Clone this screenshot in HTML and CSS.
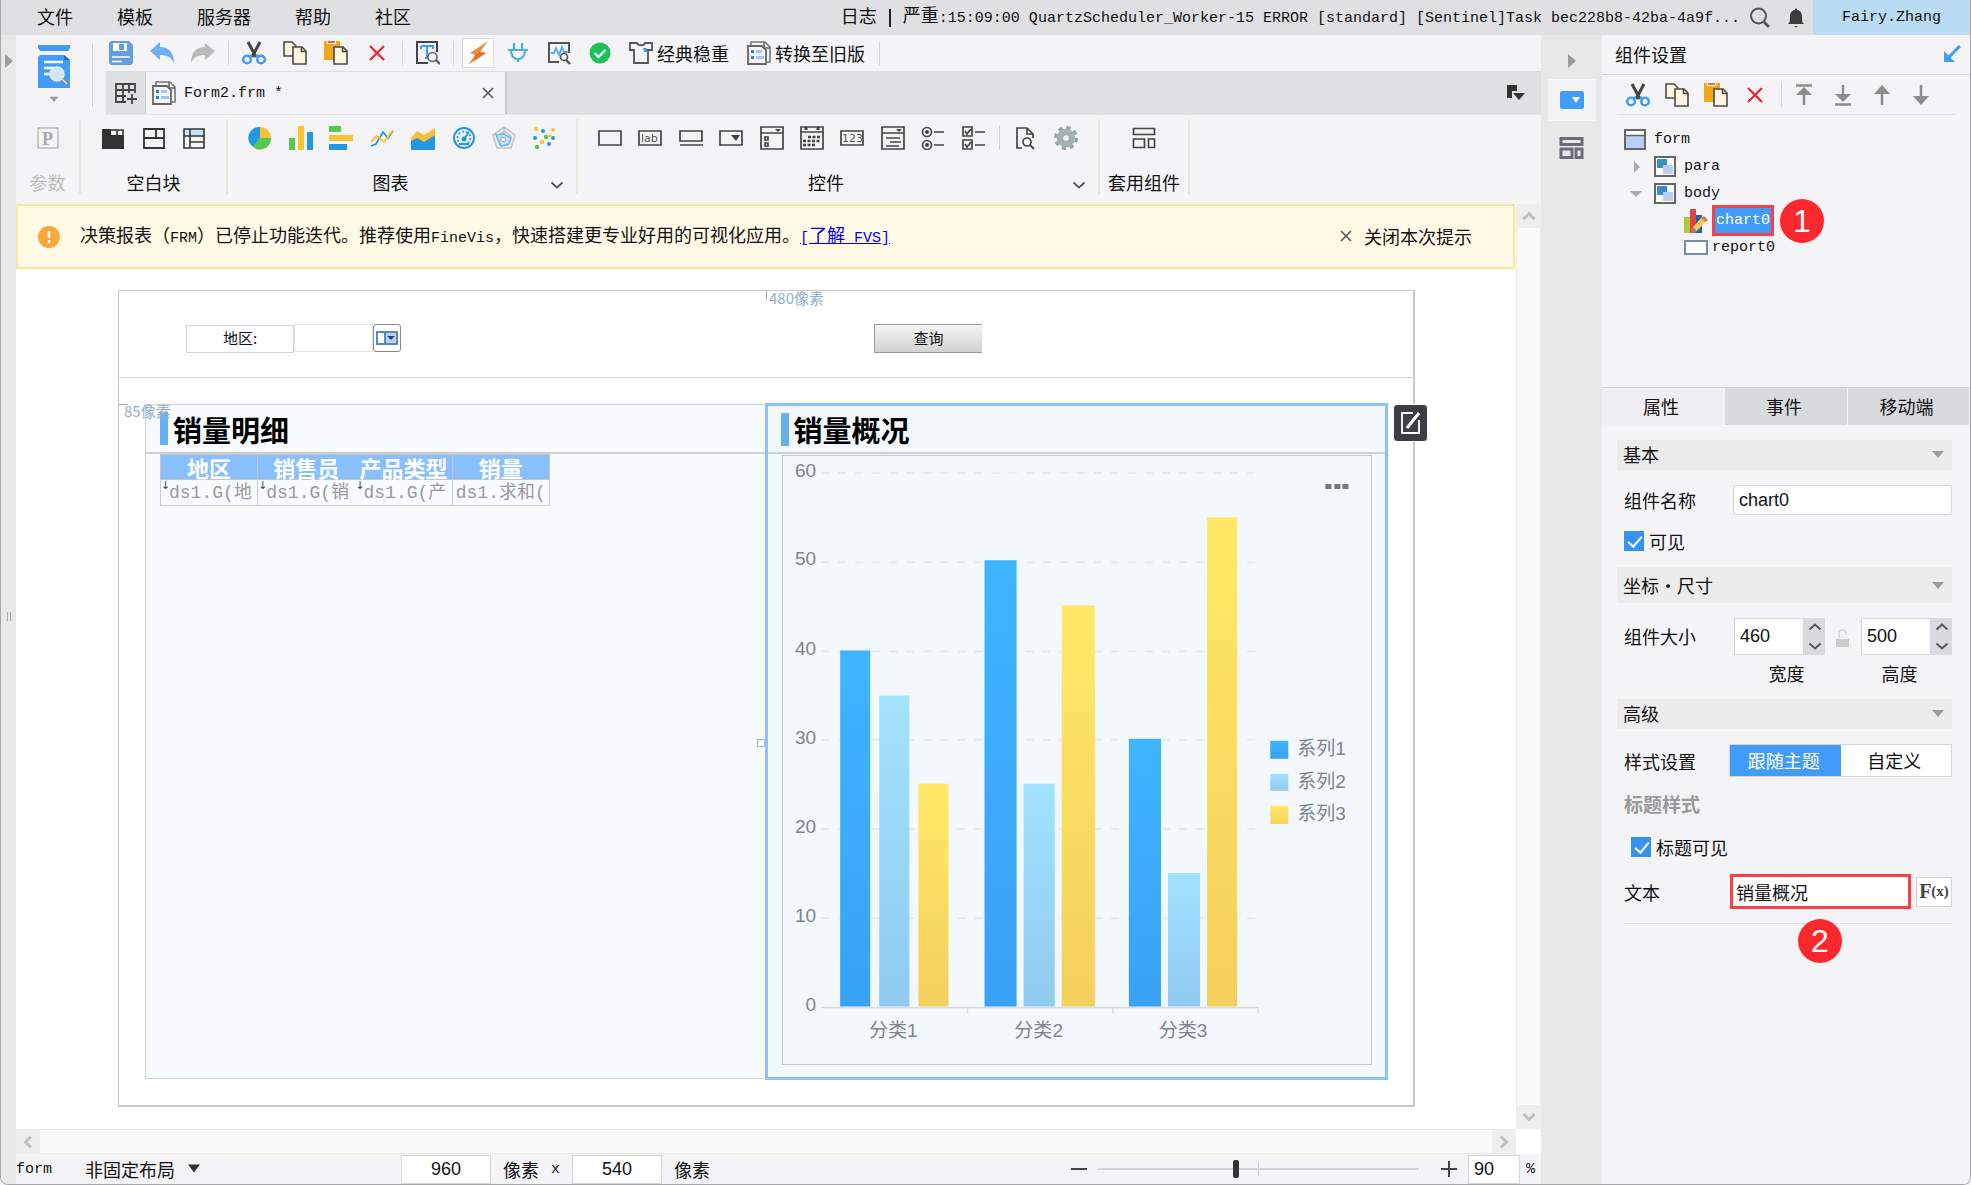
FILE: index.html
```html
<!DOCTYPE html>
<html lang="zh-CN">
<head>
<meta charset="utf-8">
<title>Form2.frm</title>
<link rel="stylesheet" href="styles.css">
</head>
<body>
<svg class="defs" aria-hidden="true">
  <symbol id="cut" viewBox="0 0 24 24"><path d="M6 1l8 15M18 1l-8 15" stroke="#444" stroke-width="3" fill="none"/><path d="M10 14l-3 2M14 14l3 2" stroke="#419bf9" stroke-width="2.5"/><circle cx="5" cy="18.500" r="3.800" fill="none" stroke="#419bf9" stroke-width="2.500"/><circle cx="19" cy="18.500" r="3.800" fill="none" stroke="#419bf9" stroke-width="2.500"/></symbol>
  <symbol id="copy" viewBox="0 0 24 24"><path d="M1 1h8l4 4v10H1z" fill="#fff6df" stroke="#4a4a4a" stroke-width="1.600"/><path d="M10 6h9l4 4v13H10z" fill="#fff6df" stroke="#4a4a4a" stroke-width="1.600"/><path d="M18.500 6v4.500H23" fill="none" stroke="#4a4a4a" stroke-width="1.600"/></symbol>
  <symbol id="paste" viewBox="0 0 24 24"><path d="M0 0h16v19H0z" fill="#f0a818"/><path d="M3 0h9v3H3z" fill="#fff"/><path d="M4 0h7v2H4z" fill="#e0703a"/><path d="M10 6h9l4 4v13H10z" fill="#fff6df" stroke="#4a4a4a" stroke-width="1.600"/><path d="M18.500 6v4.500H23" fill="none" stroke="#4a4a4a" stroke-width="1.600"/></symbol>
  <symbol id="del" viewBox="0 0 24 24"><path d="M5 5l14 14M19 5L5 19" stroke="#e8262c" stroke-width="2.200"/></symbol>
  <symbol id="close" viewBox="0 0 12 12"><path d="M1 1l10 10M11 1L1 11" stroke="#555" stroke-width="1.600"/></symbol>
  <symbol id="chev" viewBox="0 0 14 14"><path d="M1.500 4.500L7 9.500l5.500-5" fill="none" stroke="#555" stroke-width="1.800"/></symbol>
  <symbol id="arr" viewBox="0 0 14 14"><path d="M1.500 4L7 9.500 12.500 4" fill="none" stroke="#bfbfbd" stroke-width="3"/></symbol>
  <symbol id="tri" viewBox="0 0 12 8"><path d="M0 1h12L6 8z" fill="#9c9c9c"/></symbol>
  <symbol id="blocks" viewBox="0 0 24 22"><path d="M1.500 1.500h21v6h-21zM1.500 12h11v8.500h-11zM16.500 12h6v8.500h-6z" fill="none" stroke="currentColor" stroke-width="var(--w)"/></symbol>
  <symbol id="form" viewBox="0 0 24 24"><path d="M4 5V1h14l5 5v15h-3" fill="none" stroke="#777" stroke-width="1.600"/><path d="M1 5h14l4 4v14H1z" fill="#f4f4f7" stroke="#666" stroke-width="1.800"/><path d="M17 1v6h6" fill="none" stroke="#666" stroke-width="1.600"/><path d="M4 9h3v3H4zM4 15h3v3H4z" fill="#2f7fd0"/><path d="M9 9h6v3H9zM9 15h8v3H9z" fill="#9fc6f5"/></symbol>
  <symbol id="box" viewBox="0 0 22 21"><path d="M1 1h20v19H1z" fill="#fff" stroke="#666" stroke-width="2"/><path d="M3 3h10v9H3z" fill="#3590c8"/><path d="M9 9h10v9H9z" fill="#b7cff3"/></symbol>
</svg>

<div class="app">
  <header class="menubar">
    <nav class="menus">
      <button>文件</button><button>模板</button><button>服务器</button><button>帮助</button><button>社区</button>
    </nav>
    <div class="log"><span>日志</span><i></i><span><b>严重</b>:15:09:00 QuartzScheduler_Worker-15 ERROR [standard] [Sentinel]Task bec228b8-42ba-4a9f...</span></div>
    <button class="top-ic" aria-label="搜索"><svg width="22" height="22" viewBox="0 0 22 22"><circle cx="9.500" cy="9" r="7.500" fill="none" stroke="#555" stroke-width="2"/><path d="M15 15l5 5" stroke="#555" stroke-width="2.800"/></svg></button>
    <button class="top-ic bell" aria-label="通知"><svg width="18" height="22" viewBox="0 0 18 22"><path d="M9 1l1.500 2C14 4 15 6.500 15 10c0 4 0 5 2 7H1c2-2 2-3 2-7 0-3.500 1-6 4.500-7zM7 19h4l-2 1.500z" fill="#3c3c3c"/></svg></button>
    <button class="user">Fairy.Zhang</button>
  </header>

  <div class="work">
    <aside class="strip">
      <svg width="8" height="14" viewBox="0 0 8 14"><path d="M0 0l8 7-8 7z" fill="#9c9c9c"/></svg>
      <span class="grip"></span>
    </aside>

    <main class="main">
      <div class="head">
        <button class="logo" aria-label="预览">
          <svg width="32" height="43" viewBox="0 0 32 43"><path d="M0 0h32v3l-2 3H2L0 3z" fill="#419bf9"/><path d="M2 10h24l6 5v28H0V12z" fill="#419bf9"/><path d="M26 10l6 5h-6z" fill="#1f6fc4"/><path d="M6 17h19M6 23h10M6 29h7" stroke="#fff" stroke-width="2.500"/><circle cx="19" cy="29" r="7" fill="#cfe8fb" stroke="#e9eef2" stroke-width="1.500"/><path d="M24 34l6 6" stroke="#8a8a8a" stroke-width="3.500"/><path d="M24 34l5 5" stroke="#ddd" stroke-width="1.500"/></svg>
          <svg width="10" height="6" viewBox="0 0 12 8"><use href="#tri"/></svg>
        </button>
        <span class="head-sep"></span>
        <div class="head-rows">
          <div class="toolbar">
            <button aria-label="保存"><svg viewBox="0 0 24 24"><path d="M2 0h18l4 4v18l-2 2H2l-2-2V2z" fill="#619ee2"/><path d="M4 2h14v8H4z" fill="#fff"/><path d="M10 3h5v6h-5z" fill="#619ee2"/><path d="M3 16h18M3 20.500h10" stroke="#fff" stroke-width="1.600"/></svg></button>
            <button aria-label="撤销"><svg viewBox="0 0 24 24"><path d="M0 10l10-9v5c9 0 14 6 14 16-3-6-7-8-14-8v5z" fill="#6fb0f3"/></svg></button>
            <button aria-label="重做"><svg viewBox="0 0 24 24"><path d="M24 10L14 2v4C5 6 0 12 0 22c3-6 7-8 14-8v5z" fill="#b9b9b9"/></svg></button>
            <i class="sep"></i>
            <button aria-label="剪切"><svg><use href="#cut"/></svg></button>
            <button aria-label="复制"><svg><use href="#copy"/></svg></button>
            <button aria-label="粘贴"><svg><use href="#paste"/></svg></button>
            <button aria-label="删除"><svg><use href="#del"/></svg></button>
            <i class="sep"></i>
            <button aria-label="查找"><svg viewBox="0 0 24 24"><path d="M12 22H1V1h20v10" fill="none" stroke="#444" stroke-width="2"/><path d="M5 5h12v3M5 8V5M11 5v12M9 17h4" fill="none" stroke="#419bf9" stroke-width="2.200"/><circle cx="16.500" cy="16" r="4.500" fill="#f4f4f7" stroke="#666" stroke-width="1.600"/><path d="M20 19l4 4" stroke="#666" stroke-width="2.500"/></svg></button>
            <i class="sep"></i>
            <button class="boxed" aria-label="主题"><svg viewBox="0 0 24 24"><path d="M22 0L4 12l5 2-7 10 18-12-6-1z" fill="#f08c3c"/><path d="M9 14l5-3 6 1-12 8z" fill="#dc7430"/></svg></button>
            <button aria-label="数据连接"><svg viewBox="0 0 24 24"><path d="M8 2v6M16 2v6M2 9h20M5 9c0 6 3 9 7 9s7-3 7-9M12 18v3" fill="none" stroke="#45b0e8" stroke-width="2.200"/></svg></button>
            <button aria-label="监控"><svg viewBox="0 0 24 24"><path d="M12 21H2V2h20v10" fill="none" stroke="#555" stroke-width="2"/><path d="M4 12h3l2-5 3 7 3-8 2 5h4" fill="none" stroke="#55a7f7" stroke-width="1.800"/><circle cx="17" cy="16" r="3.500" fill="#f4f4f7" stroke="#555" stroke-width="1.600"/><path d="M19 19l4 4" stroke="#555" stroke-width="2.400"/></svg></button>
            <button aria-label="检查"><svg viewBox="0 0 24 24"><circle cx="12" cy="12" r="10.500" fill="#1cc255"/><path d="M6.500 12l4 4 7-7" fill="none" stroke="#fff" stroke-width="2.200"/></svg></button>
            <button class="wide"><svg viewBox="0 0 24 24"><path d="M1 2h7c1 3 7 3 8 0h7v7h-4v13H5V9H1z" fill="none" stroke="#555" stroke-width="1.800"/><path d="M14 7h4v4h-3z" fill="#419bf9"/></svg>经典稳重</button>
            <button class="wide"><svg><use href="#form"/></svg>转换至旧版</button>
            <i class="sep"></i>
          </div>
          <div class="tabs">
            <button class="newtab" aria-label="新建"><svg width="22" height="22" viewBox="0 0 22 22"><path d="M11 20H1V2h19v9M1 8h19M1 14h10M8 2v18M14 2v9" fill="none" stroke="#444" stroke-width="1.800"/><path d="M17 12v10M12 17h10" stroke="#444" stroke-width="1.800"/></svg></button>
            <div class="tab"><svg width="24" height="24"><use href="#form"/></svg><span>Form2.frm *</span><button aria-label="关闭"><svg width="12" height="12"><use href="#close"/></svg></button></div>
            <button class="tablist" aria-label="标签列表"><svg width="18" height="16" viewBox="0 0 18 16"><path d="M0 0h10v6H5v7H0z" fill="#333"/><path d="M6 8h12l-6 7z" fill="#333"/></svg></button>
          </div>
        </div>
      </div>

      <div class="ribbon">
        <section class="g g1 off"><div class="row"><svg viewBox="0 0 24 24"><path d="M2 2h20v20H2z" fill="none" stroke="#bbb" stroke-width="1.500"/><text x="6" y="19" class="p">P</text></svg></div><span>参数</span></section>
        <section class="g g2"><div class="row">
          <svg viewBox="0 0 24 24"><path d="M1 3h9v6h13v14H1z" fill="#333"/><path d="M10 4h6v5M16 4h6v5" fill="none" stroke="#333" stroke-width="1.600"/></svg>
          <svg viewBox="0 0 24 24"><path d="M2 3h20v19H2zM2 12h20M14 3v9" fill="none" stroke="#333" stroke-width="1.800"/></svg>
          <svg viewBox="0 0 24 24"><path d="M2 3h20v7H2z" fill="#bfe6fa"/><path d="M2 3h20v19H2zM2 10h20M8 16h14M8 3v19" fill="none" stroke="#333" stroke-width="1.600"/></svg>
        </div><span>空白块</span></section>
        <section class="g g3"><div class="row">
          <svg viewBox="0 0 24 24"><path d="M12 12V1a11 11 0 0 1 11 12z" fill="#fbc134"/><path d="M12 12h11a11 11 0 0 1-18 9z" fill="#55c84e"/><path d="M12 12L5 21A11 11 0 0 1 12 1z" fill="#2298e2"/></svg>
          <svg viewBox="0 0 24 24"><path d="M0 12h6v12H0z" fill="#55c84e"/><path d="M9 0h6v24H9z" fill="#fbc134"/><path d="M18 6h6v18h-6z" fill="#2298e2"/></svg>
          <svg viewBox="0 0 24 24"><path d="M0 0h12v6H0z" fill="#55c84e"/><path d="M0 9h24v6H0z" fill="#fbc134"/><path d="M0 18h18v6H0z" fill="#2298e2"/></svg>
          <svg viewBox="0 0 24 24"><path d="M1 20l5-2 7-12 5 6 5-7" fill="none" stroke="#2298e2" stroke-width="1.800"/><path d="M1 16l6-6 7 6 9-12" fill="none" stroke="#fbc134" stroke-width="1.800"/></svg>
          <svg viewBox="0 0 24 24"><path d="M0 12l6-7 7 4 11-7v22H0z" fill="#fbc134"/><path d="M0 15l6-3 7 4 11-7v15H0z" fill="#2298e2"/></svg>
          <svg viewBox="0 0 24 24"><circle cx="12" cy="12" r="10" fill="none" stroke="#2298e2" stroke-width="2"/><circle cx="12" cy="12" r="6.500" fill="none" stroke="#2298e2" stroke-width="1.800" stroke-dasharray="2 2"/><path d="M12 13l5-7" stroke="#2298e2" stroke-width="2"/><circle cx="12" cy="13" r="2.500" fill="#2298e2"/><path d="M7 18h10" stroke="#2298e2" stroke-width="2"/></svg>
          <svg viewBox="0 0 24 24"><path d="M12 1l11 8-4 13H5L1 9z M12 5l7 5-3 9H8L5 10zM12 1v12" fill="none" stroke="#c4c4c4" stroke-width="1.600"/><path d="M4 9l8-1 7 4-2 6-8 2z" fill="#bfe3f8" stroke="#63bdf0" stroke-width="1.600"/><path d="M9 11l5 1-1 4-4-1z" fill="#fff" stroke="#aaa"/></svg>
          <svg viewBox="0 0 24 24"><g fill="#fbc134"><circle cx="3" cy="3" r="2"/><circle cx="20" cy="4" r="2"/><circle cx="9" cy="16" r="2.200"/><circle cx="17" cy="10" r="1.500"/></g><g fill="#2298e2"><circle cx="10" cy="5" r="2"/><circle cx="2" cy="12" r="2"/><circle cx="16" cy="18" r="2"/><circle cx="20" cy="12" r="2"/></g><g fill="#55c84e"><circle cx="13" cy="11" r="2.200"/><circle cx="4" cy="21" r="2.200"/></g></svg>
        </div><span>图表</span><button class="more" aria-label="更多图表"><svg width="14" height="14"><use href="#chev"/></svg></button></section>
        <section class="g g4"><div class="row">
          <svg viewBox="0 0 24 24"><path d="M1 5h22v14H1z" class="ln"/></svg>
          <svg viewBox="0 0 24 24"><path d="M1 5h22v14H1z" class="ln"/><text x="3" y="16" class="mini">lab</text></svg>
          <svg viewBox="0 0 24 24"><path d="M1 5h22v10H1zM1 19h23" class="ln"/></svg>
          <svg viewBox="0 0 24 24"><path d="M1 5h22v14H1z" class="ln"/><path d="M12 9h9l-4 6z" fill="#444"/></svg>
          <svg viewBox="0 0 24 24"><path d="M1 1h22v22H1zM1 7h22M5 11h3v3H5zM5 17h3v3H5z" class="ln"/><path d="M15 3h6l-3 3z" fill="#444"/></svg>
          <svg viewBox="0 0 24 24"><path d="M1 1h22v22H1zM1 6h22" class="ln"/><path d="M8 11h12M3 15h17M3 19h12" stroke="#444" stroke-width="2.500" stroke-dasharray="3 1.500"/><path d="M6 1v3M18 1v3" stroke="#444" stroke-width="3"/></svg>
          <svg viewBox="0 0 24 24"><path d="M1 5h22v14H1z" class="ln"/><text x="2" y="16" class="mini">123</text></svg>
          <svg viewBox="0 0 24 24"><path d="M1 1h22v22H1zM1 7h22M5 12h14M9 16h11M5 20h13" class="ln"/><path d="M15 3h6l-3 3z" fill="#444"/></svg>
          <svg viewBox="0 0 24 24"><circle cx="6" cy="6" r="4.500" class="ln"/><circle cx="6" cy="6" r="2" fill="#444"/><circle cx="6" cy="19" r="4.500" class="ln"/><circle cx="6" cy="19" r="2" fill="#444"/><path d="M13 6h10M13 19h10" class="ln"/></svg>
          <svg viewBox="0 0 24 24"><path d="M1 1h9v9H1zM1 14h9v9H1zM3 5l2 3 4-5M3 18l2 3 4-5M13 6h10M13 19h10" class="ln"/></svg>
          <i class="sep"></i>
          <svg viewBox="0 0 24 24"><path d="M9 22H4V2h10l6 6v4M14 2v6h6" class="ln"/><circle cx="14" cy="16" r="4" class="ln"/><path d="M17 19l4 4" stroke="#444" stroke-width="2"/></svg>
          <svg viewBox="0 0 24 24"><circle cx="12" cy="12" r="10" fill="none" stroke="#93a3a3" stroke-width="4" stroke-dasharray="4 3.850"/><circle cx="12" cy="12" r="6" fill="none" stroke="#a3b1b1" stroke-width="6.500"/></svg>
        </div><span>控件</span><button class="more" aria-label="更多控件"><svg width="14" height="14"><use href="#chev"/></svg></button></section>
        <section class="g g5"><div class="row"><svg class="bl"><use href="#blocks"/></svg></div><span>套用组件</span></section>
      </div>

      <div class="editor">
        <div class="canvas">
          <div class="banner">
            <svg width="22" height="22" viewBox="0 0 22 22"><circle cx="11" cy="11" r="11" fill="#f9a93a"/><path d="M11 5v7M11 14v3" stroke="#fff" stroke-width="2.500"/></svg>
            <p>决策报表（<span class="mono">FRM</span>）已停止功能迭代。推荐使用<span class="mono">FineVis</span>，快速搭建更专业好用的可视化应用。<a href="#fvs"><span class="mono">[</span>了解<span class="mono"> FVS]</span></a></p>
            <button><svg width="12" height="12"><use href="#close"/></svg>关闭本次提示</button>
          </div>
          <div class="stage">
            <div class="form">
              <div class="para">
                <span class="mark m480">480像素</span>
                <label for="area">地区:</label><input id="area"><button class="drop" aria-label="展开"><svg width="22" height="14" viewBox="0 0 22 14"><path d="M1 1h20v12H1z" fill="#fff" stroke="#5b86c4" stroke-width="2"/><path d="M9 1h12v12H9z" fill="#b9d2f0" stroke="#5b86c4" stroke-width="2"/><path d="M11 5h8l-4 4z" fill="#223f8f"/></svg></button>
                <button class="query">查询</button>
              </div>
              <div class="body">
                <span class="mark m85">85像素</span>
                <section class="card">
                  <h2>销量明细</h2>
                  <table>
                    <thead><tr><th>地区</th><th>销售员</th><th>产品类型</th><th>销量</th></tr></thead>
                    <tbody><tr><td class="d">ds1.G(地</td><td class="d">ds1.G(销</td><td class="d">ds1.G(产</td><td>ds1.求和(</td></tr></tbody>
                  </table>
                </section>
                <section class="card sel">
                  <i class="handle"></i>
                  <button class="edit" aria-label="编辑"><svg width="22" height="24" viewBox="0 0 22 24"><path d="M13 2H2v20h17V9" fill="none" stroke="#fff" stroke-width="1.800"/><path d="M7 17l12-15" stroke="#fff" stroke-width="3"/></svg></button>
                  <h2>销量概况</h2>
                  <div class="chart">
                    <svg viewBox="0 0 587 606" role="img" aria-label="销量概况">
                      <defs>
                        <linearGradient id="a" x2="0" y2="1"><stop stop-color="#3fb5ff"/><stop offset="1" stop-color="#38a2f6"/></linearGradient>
                        <linearGradient id="b" x2="0" y2="1"><stop stop-color="#a2e3ff"/><stop offset="1" stop-color="#8fcaf0"/></linearGradient>
                        <linearGradient id="c" x2="0" y2="1"><stop stop-color="#ffe966"/><stop offset="1" stop-color="#f4d05c"/></linearGradient>
                      </defs>
                      <path class="grid" d="M38 17h435M38 106h435M38 195h435M38 283h435M38 372h435M38 461h435"/>
                      <path d="M38 550h436v6M329 550v6M184 550v6" fill="none" stroke="#d9dde2" stroke-width="1.500"/>
                      <path fill="url(#a)" d="M57 194h30v355H57z"/><path fill="url(#a)" d="M201 104h32v445h-32z"/><path fill="url(#a)" d="M345 282h32v267h-32z"/>
                      <path fill="url(#b)" d="M96 239h30v310H96z"/><path fill="url(#b)" d="M240 327h31v222h-31z"/><path fill="url(#b)" d="M384 416h32v133h-32z"/>
                      <path fill="url(#c)" d="M135 327h30v222h-30z"/><path fill="url(#c)" d="M278 149h33v400h-33z"/><path fill="url(#c)" d="M423 61h30v488h-30z"/>
                      <g class="t end"><text x="33" y="21">60</text><text x="33" y="109">50</text><text x="33" y="198">40</text><text x="33" y="287">30</text><text x="33" y="376">20</text><text x="33" y="465">10</text><text x="33" y="554">0</text></g>
                      <g class="t mid"><text x="110" y="580">分类1</text><text x="255" y="580">分类2</text><text x="399" y="580">分类3</text></g>
                      <path d="M486 284h18v18h-18z" fill="url(#a)"/><path d="M486 317h18v17h-18z" fill="url(#b)"/><path d="M486 349h18v18h-18z" fill="url(#c)"/>
                      <g class="t"><text x="513" y="298">系列1</text><text x="513" y="331">系列2</text><text x="513" y="363">系列3</text></g>
                      <path d="M541 28h6v5h-6zM550 28h6v5h-6zM558 28h6v5h-6z" fill="#747a80"/>
                    </svg>
                  </div>
                </section>
              </div>
            </div>
          </div>
        </div>
        <div class="vbar"><button aria-label="向上"><svg width="14" height="14" class="up"><use href="#arr"/></svg></button><button aria-label="向下"><svg width="14" height="14"><use href="#arr"/></svg></button></div>
        <div class="hbar"><button aria-label="向左"><svg width="14" height="14" class="lf"><use href="#arr"/></svg></button><button aria-label="向右"><svg width="14" height="14" class="rt"><use href="#arr"/></svg></button></div>
      </div>

      <footer class="status">
        <span class="st-name">form</span>
        <button class="layout">非固定布局<svg width="12" height="9" viewBox="0 0 12 8"><path d="M0 0h12L6 8z" fill="#333"/></svg></button>
        <label class="dim"><input value="960">像素</label><span class="times">x</span><label class="dim"><input value="540">像素</label>
        <div class="zoom">
          <button aria-label="缩小"><svg width="16" height="16" viewBox="0 0 16 16"><path d="M0 8h16" stroke="#444" stroke-width="2"/></svg></button>
          <input type="range" min="0" max="100" value="43" aria-label="缩放">
          <button aria-label="放大"><svg width="16" height="16" viewBox="0 0 16 16"><path d="M0 8h16M8 0v16" stroke="#444" stroke-width="2"/></svg></button>
        </div>
        <label class="pct"><input value="90">%</label>
      </footer>
    </main>

    <nav class="rail">
      <svg width="8" height="14" viewBox="0 0 8 14"><path d="M0 0l8 7-8 7z" fill="#9c9c9c"/></svg>
      <button class="on" aria-label="组件设置"><svg width="24" height="18" viewBox="0 0 24 18"><rect width="24" height="18" rx="2" fill="#419bf9"/><path d="M12 6h8l-4 6z" fill="#fff"/></svg></button>
      <button aria-label="组件库"><svg width="25" height="22" class="thick"><use href="#blocks"/></svg></button>
    </nav>

    <aside class="panel">
      <div class="ptitle"><h1>组件设置</h1><button aria-label="停靠"><svg width="17" height="17" viewBox="0 0 17 17"><path d="M16 1L5 12" stroke="#419bf9" stroke-width="3"/><path d="M0 6l11 11H0z" fill="#419bf9"/></svg></button></div>
      <div class="ptools">
        <button aria-label="剪切"><svg><use href="#cut"/></svg></button><button aria-label="复制"><svg><use href="#copy"/></svg></button><button aria-label="粘贴"><svg><use href="#paste"/></svg></button><button aria-label="删除"><svg><use href="#del"/></svg></button>
        <i class="sep"></i>
        <button aria-label="置顶"><svg viewBox="0 0 24 24"><path d="M4 2.500h16M12 22V8" class="ar"/><path d="M4 12l8-8 8 8z" fill="#8c8c8c"/></svg></button>
        <button aria-label="置底"><svg viewBox="0 0 24 24"><path d="M4 21.500h16M12 2v12" class="ar"/><path d="M4 11l8 8 8-8z" fill="#8c8c8c"/></svg></button>
        <button aria-label="上移"><svg viewBox="0 0 24 24"><path d="M12 22V8" class="ar"/><path d="M4 11l8-9 8 9z" fill="#8c8c8c"/></svg></button>
        <button aria-label="下移"><svg viewBox="0 0 24 24"><path d="M12 2v14" class="ar"/><path d="M4 13l8 9 8-9z" fill="#8c8c8c"/></svg></button>
      </div>
      <ul class="tree">
        <li><svg width="22" height="21" viewBox="0 0 22 21"><path d="M1 1h20v19H1z" fill="#fff" stroke="#666" stroke-width="2"/><path d="M2 7h18v12H2z" fill="#b7cff3"/><path d="M1 6.500h20" stroke="#666" stroke-width="1.500"/></svg>form</li>
        <li class="l1"><svg width="12" height="12" viewBox="0 0 12 12"><path d="M4 0l6 6-6 6z" fill="#aaa"/></svg><svg width="22" height="21"><use href="#box"/></svg>para</li>
        <li class="l1"><svg width="12" height="12" viewBox="0 0 12 12"><path d="M0 3h12L6 9z" fill="#aaa"/></svg><svg width="22" height="21"><use href="#box"/></svg>body</li>
        <li class="l2"><svg width="24" height="24" viewBox="0 0 24 24"><path d="M0 8h6v16H0z" fill="#b4c83e"/><path d="M6 0h6v24H6z" fill="#e64146"/><path d="M12 6h6v18h-6z" fill="#1469b0"/><path d="M9 18l9-10 4 4-9 10-5 2z" fill="#fbc858"/><path d="M17 9l3-2 4 4-3 2z" fill="#f07050"/><path d="M8 24l1-6 4 4z" fill="#888"/></svg><mark>chart0</mark><b class="step">1</b></li>
        <li class="l2"><svg width="24" height="15" viewBox="0 0 24 15"><path d="M1 1h22v13H1z" fill="#fff" stroke="#6d8cba" stroke-width="2"/></svg>report0</li>
      </ul>
      <div class="ptabs"><button class="on">属性</button><button>事件</button><button>移动端</button></div>
      <div class="props">
        <h3>基本<svg width="12" height="8"><use href="#tri"/></svg></h3>
        <div class="f f-name"><label for="nm">组件名称</label><input id="nm" value="chart0"></div>
        <label class="ck"><input type="checkbox" checked>可见</label>
        <h3 class="tall">坐标・尺寸<svg width="12" height="8"><use href="#tri"/></svg></h3>
        <div class="f f-size"><span>组件大小</span>
          <label class="spin w"><span class="nb"><input value="460"><span><button aria-label="增加"><svg width="14" height="14" class="up"><use href="#chev"/></svg></button><button aria-label="减少"><svg width="14" height="14"><use href="#chev"/></svg></button></span></span><span>宽度</span></label>
          <svg class="lock" width="14" height="20" viewBox="0 0 14 20"><path d="M0 11h13v8H0z" fill="#ccc"/><path d="M3 11V5c0-4 7-4 7 0v1" fill="none" stroke="#d6d6d6" stroke-width="1.500"/></svg>
          <label class="spin h"><span class="nb"><input value="500"><span><button aria-label="增加"><svg width="14" height="14" class="up"><use href="#chev"/></svg></button><button aria-label="减少"><svg width="14" height="14"><use href="#chev"/></svg></button></span></span><span>高度</span></label>
        </div>
        <h3>高级<svg width="12" height="8"><use href="#tri"/></svg></h3>
        <div class="f f-style"><span>样式设置</span><div class="seg"><button class="on">跟随主题</button><button>自定义</button></div></div>
        <h4>标题样式</h4>
        <label class="ck in"><input type="checkbox" checked>标题可见</label>
        <div class="f f-text"><label for="tx">文本</label><input id="tx" value="销量概况"><button class="fx">F<small>(x)</small></button><b class="step">2</b></div>
      </div>
    </aside>
  </div>
</div>
</body>
</html>
```
FILE: styles.css
```css
* { box-sizing: border-box; }
body { margin: 0; font: 18px/24px "Noto Sans CJK SC", sans-serif; color: #111; background: #f4f4f7; }
body, button, input { font-family: "Noto Sans CJK SC", sans-serif; }
button { border: 0; padding: 0; margin: 0; background: none; color: inherit; font-size: 18px; line-height: 24px; display: flex; align-items: center; justify-content: center; }
input { border: 1px solid #d6d7da; background: #fff; color: #111; font: 18px "Liberation Sans", "Noto Sans CJK SC", sans-serif; padding: 0 5px; margin: 0; min-width: 0; border-radius: 0; }
h1, h2, h3, h4, p, ul { margin: 0; padding: 0; font-weight: 400; font-size: 18px; list-style: none; }
svg { display: block; flex: none; }
.defs { position: absolute; width: 0; height: 0; }
.sep { flex: none; width: 1px; height: 24px; background: #d2d3d6; }
.mono { font-family: "Liberation Mono", monospace; font-size: 15px; }
.up { transform: rotate(180deg); }
.lf { transform: rotate(90deg); }
.rt { transform: rotate(-90deg); }

.app { min-height: 100vh; display: flex; flex-direction: column; border: 1px solid #a6a6a8; border-top: 0; border-radius: 0 0 8px 8px; overflow: hidden; }
.work { flex: 1; display: flex; }

/* menu bar */
.menubar { height: 35px; background: #e0e0e2; display: flex; align-items: center; }
.menus { display: flex; gap: 44px; padding: 0 0 4px 36px; margin-right: auto; }
.log { display: flex; align-items: center; white-space: nowrap; padding-right: 9px; font: 15px/24px "Liberation Mono", "Noto Sans CJK SC", monospace; }
.log b, .log span:first-child { font-size: 18px; font-weight: 400; }
.log i { width: 2px; height: 18px; background: #222; margin: 0 12px; }
.top-ic { width: 22px; margin-right: 16px; }
.bell { width: 18px; margin-right: 8px; }
.user { width: 157px; height: 35px; background: #b9dcf2; font: 15px "Liberation Mono", monospace; }

/* left strip */
.strip { width: 15px; background: #e8e8e8; display: flex; flex-direction: column; align-items: center; padding: 19px 0; }
.grip { width: 4px; height: 9px; border: solid #aaa; border-width: 0 1px; margin: auto 0; }

.main { flex: 1; min-width: 0; display: flex; flex-direction: column; }

/* head: logo, toolbar and document tabs */
.head { display: flex; }
.logo { width: 76px; flex-direction: column; gap: 8px; padding-bottom: 4px; }
.head-sep { width: 1px; background: #d2d3d6; margin: 9px 13px 8px 0; }
.head-rows { flex: 1; }
.toolbar { height: 37px; display: flex; align-items: center; gap: 17px; padding-left: 3px; border-bottom: 1px solid #dcdde0; }
.toolbar svg, .ptools svg { width: 24px; height: 24px; }
.toolbar .sep { margin: 0 -4px; }
.toolbar .boxed { width: 32px; height: 30px; background: #fff; border: 1px solid #ddd; margin: 0 -5px 0 -5px; }
.toolbar .wide { gap: 4px; padding-bottom: 1px; margin-right: 1px; }
.tabs { height: 43px; background: #e0e0e2; display: flex; align-items: stretch; border-bottom: 1px solid #e6e6e9; }
.newtab { width: 40px; border-right: 1px solid #d0d0d2; }
.tab { width: 361px; background: #f4f4f7; border-right: 2px solid #cbcbce; display: flex; align-items: center; gap: 8px; padding: 0 11px 0 6px; font: 15px/24px "Liberation Mono", monospace; }
.tab span { padding-top: 2px; }
.tab button, .tablist { margin-left: auto; }
.tablist { margin-right: 16px; }

/* ribbon */
.ribbon { height: 89px; display: flex; padding: 4px 0 10px; }
.g { position: relative; border-right: 2px solid #e8e7de; display: flex; flex-direction: column; align-items: center; justify-content: space-between; padding-top: 7px; }
.row { display: flex; justify-content: space-between; align-items: center; align-self: stretch; height: 24px; }
.row svg { width: 24px; height: 24px; }
.g > span { line-height: 24px; white-space: nowrap; }
.g1 { width: 65px; padding-right: 20px; padding-left: 20px; }
.off { color: #bdbdbd; }
.g2 { width: 147px; padding-left: 20px; padding-right: 20px; }
.g3 { width: 350px; padding-left: 20px; padding-right: 19px; }
.g4 { width: 522px; padding-left: 20px; padding-right: 20px; }
.g3 > span, .g4 > span { padding-right: 24px; }
.g4 .sep { margin: 0 -3px; }
.g5 { width: 90px; }
.g5 .row { justify-content: center; }
.more { position: absolute; right: 12px; bottom: 2px; }
.bl { --w: 1.700; color: #444; }
.ln { fill: none; stroke: #444; stroke-width: 1.700; }
.mini { font: 11px "DejaVu Sans", sans-serif; fill: #555; }
.p { font: bold 18px "Liberation Serif", serif; fill: #aaa; }

/* editor */
.editor { flex: 1; display: grid; grid-template-columns: 1fr 25px; grid-template-rows: 1fr 25px; background: #fff; }
.canvas { display: flex; flex-direction: column; }
.banner { height: 65px; margin-right: 1px; background: #fffae6; border: 2px solid #fde49a; display: flex; align-items: center; padding: 0 41px 0 20px; }
.banner p { margin-left: 20px; white-space: nowrap; }
.banner a { color: #00f; }
.banner button { margin-left: auto; gap: 12px; padding-bottom: 2px; }
.stage { flex: 1; display: flex; padding: 21px 101px 22px 102px; }
.form { flex: 1; display: flex; flex-direction: column; border: solid #c9c9c9; border-width: 1px 2px 2px 1px; }
.para { position: relative; height: 87px; border-bottom: 1px solid #cfcfcf; display: flex; align-items: flex-start; padding: 33px 0 0 67px; font-size: 15px; }
.para label { width: 108px; height: 28px; border: 1px solid #d5d5d5; text-align: center; margin-top: 1px; }
.para input { width: 79px; height: 28px; border-color: #e2e2e2; }
.drop { width: 28px; height: 28px; border: 1px solid #888; border-radius: 3px; }
.query { width: 108px; height: 29px; margin-left: 473px; padding-bottom: 2px; border: solid #999; border-width: 1px 0 1px 1px; background: linear-gradient(#f4f4f4, #d2d2d2); font-size: 15px; }
.mark { position: absolute; font-size: 15px; line-height: 14px; color: #8fafcc; }
.m480 { left: 647px; top: 0; padding-left: 3px; }
.m480::before { content: ""; position: absolute; left: 0; top: 0; height: 9px; border-left: 1px solid #8fafcc; }
.m85 { left: 0; top: 26px; padding-left: 5px; z-index: 2; }
.m85::before { content: ""; position: absolute; left: 0; top: 0; width: 9px; border-top: 1px solid #8fafcc; }
.body { position: relative; flex: 1; display: grid; grid-template-columns: 1fr 1fr; padding: 26px 25px 26px 26px; }
.card { position: relative; background: #f8fcff; border: 1px solid #d2d4d6; }
.card h2 { height: 49px; border-bottom: 2px solid #d0d0d0; display: flex; align-items: center; gap: 5px; padding: 0 14px; font: bold 29px/44px "Noto Sans CJK SC", sans-serif; color: #000; }
.card h2::before { content: ""; width: 8px; height: 33px; background: #64b1ee; }
.sel { background: #f3f8fd; border: 3px solid #8bc2fb; margin: -1px 0 -1px -2px; }
.sel h2 { height: 48px; padding-left: 13px; }
.handle { position: absolute; left: -11px; top: 333px; width: 8px; height: 8px; border: 1px solid #9fbfe0; background: #fff; }
.edit { position: absolute; left: 100%; margin-left: 8px; top: -2px; width: 35px; height: 38px; background: #3b3e42; border: 1px solid #fff; border-radius: 4px; }
.chart { margin: 1px 13px 0 14px; border: 1px solid #c3c5c8; }
.chart svg { width: 100%; height: auto; }
.grid { fill: none; stroke: #e6eaee; stroke-width: 2; stroke-dasharray: 8 9; }
.t { font: 19px "Liberation Sans", "Noto Sans CJK SC", sans-serif; fill: #7d848c; }
.end { text-anchor: end; }
.mid { text-anchor: middle; }
table { margin-left: 14px; border-collapse: collapse; table-layout: fixed; width: 390px; }
th { height: 25px; background: #88bfff; color: #fff; font-size: 22px; line-height: 24px; padding: 0; border: 1px solid #c4c4c4; white-space: nowrap; }
td { position: relative; height: 26px; padding: 2px 0 0 8px; border: 1px solid #ccc; font: 18px/23px "Liberation Mono", "Noto Sans CJK SC", monospace; color: #999; white-space: nowrap; overflow: hidden; }
th:nth-child(2), td:nth-child(2) { border-right-color: transparent; }
th:nth-child(3), td:nth-child(3) { border-left: 0; }
td:last-child { padding-left: 3px; }
.d::before { content: "↓"; position: absolute; left: 0; top: 0; font: 11px/11px "DejaVu Sans", sans-serif; color: #444; }
.vbar { grid-column: 2; grid-row: 1; background: #f9f9f7; border: solid #ecebdf; border-width: 0 1px; display: flex; flex-direction: column; justify-content: space-between; }
.hbar { background: #f9f9f7; border: solid #ecebdf; border-width: 1px 0; display: flex; justify-content: space-between; }
.vbar button, .hbar button { width: 24px; height: 24px; background: #eeeeec; }

/* status bar */
.status { height: 30px; display: flex; align-items: center; background: #f4f4f7; font-size: 18px; }
.status input { height: 29px; }
.st-name, .times { font: 15px "Liberation Mono", monospace; }
.layout { margin-left: 33px; gap: 13px; padding-bottom: 1px; }
.dim { display: flex; align-items: center; gap: 12px; }
.dim input { width: 90px; text-align: center; }
.layout + .dim { margin-left: 201px; }
.times { margin: 0 12px; }
.zoom { margin-left: auto; display: flex; align-items: center; }
.zoom input { appearance: none; width: 321px; height: 20px; margin: 0 22px 0 11px; padding: 0; border: 0; background: linear-gradient(#ccc, #ccc) center / 1px 14px no-repeat, linear-gradient(#d6d6d8, #d6d6d8) center / 100% 2px no-repeat; }
.zoom input::-webkit-slider-thumb { appearance: none; width: 6px; height: 18px; border-radius: 2px; background: #333; }
.pct { display: flex; align-items: center; gap: 6px; margin: 0 6px 0 11px; font: 15px "Liberation Mono", monospace; }
.pct input { width: 52px; }

/* right rail */
.rail { width: 61px; background: #e8e8e8; display: flex; flex-direction: column; align-items: center; padding-top: 19px; }
.rail button { width: 48px; height: 42px; margin-top: 6px; }
.rail .on { background: #f4f4f7; margin-top: 11px; }
.thick { --w: 3; color: #6b6c77; }

/* settings panel */
.panel { width: 368px; background: #f4f4f7; }
.ptitle { height: 40px; display: flex; align-items: center; justify-content: space-between; padding: 0 9px 2px 13px; border-bottom: 1px solid #d8d8db; }
.ptools { height: 40px; margin: 0 15px; display: flex; align-items: center; gap: 15px; padding-left: 9px; border-bottom: 1px solid #e0e0e3; }
.ptools .sep { margin: 0 -5px 0 -1px; }
.ar { fill: none; stroke: #8c8c8c; stroke-width: 2.500; }
.tree { height: 273px; padding: 11px 0 0 22px; border-bottom: 1px solid #d3d4d7; font: 15px "Liberation Mono", monospace; }
.tree li { display: flex; align-items: center; height: 27px; gap: 8px; }
.tree .l1 { padding-left: 6px; }
.l1 svg + svg { margin-left: 4px; }
.tree .l2 { padding-left: 60px; gap: 4px; }
mark { background: #419bf9; color: #fff; height: 31px; width: 62px; border: 3px solid #fa4046; line-height: 26px; text-align: center; flex: none; }
.step { flex: none; width: 44px; height: 44px; border-radius: 50%; background: #fd282e; color: #fff; font: 32px/44px "Liberation Sans", sans-serif; text-align: center; }
.tree .step { margin-left: 2px; }
.ptabs { display: grid; grid-template-columns: 122px 122px 1fr; height: 37px; gap: 1px; margin-right: 1px; }
.ptabs button { background: #d9dadd; padding: 0 4px 2px 0; }
.ptabs .on { background: #f0f0f2; }
.props { padding: 15px 18px 0 15px; }
.props > * { margin-left: 7px; }
h3 { display: flex; align-items: center; justify-content: space-between; height: 30px; background: #ececec; padding: 0 8px 2px 6px; }
.props h3 { margin-left: 0; }
.props .tall { height: 36px; padding-bottom: 0; }
.f { display: flex; align-items: center; justify-content: space-between; }
.f-name { margin-top: 15px; height: 30px; }
.f-name input { width: 219px; height: 30px; }
.ck { display: flex; align-items: center; gap: 5px; width: max-content; margin-top: 14px; margin-bottom: 14px; }
.props .in { margin-left: 14px; }
.ck input { appearance: none; width: 20px; height: 20px; background: #3694f0; border: 0; padding: 0; position: relative; }
.ck input::before { content: ""; position: absolute; left: 7px; top: 2px; width: 6px; height: 12px; border: solid #fff; border-width: 0 2px 2px 0; transform: rotate(40deg); }
.f-size { margin-top: 15px; margin-bottom: 14px; align-items: flex-start; }
.f-size > span { line-height: 37px; margin-right: auto; }
.spin { display: flex; flex-direction: column; align-items: center; gap: 5px; width: 91px; }
.spin.w > span:last-child { padding-left: 14px; }
.spin.h > span:last-child { padding-right: 14px; }
.nb { display: flex; height: 37px; margin-bottom: 1px; }
.nb input { width: 70px; }
.nb > span { width: 21px; background: #d9dadd; display: flex; flex-direction: column; }
.nb button { flex: 1; width: 21px; }
.lock { margin: 10px 11px 0; }
.f-style { margin-top: 15px; }
.seg { width: 223px; height: 33px; display: flex; border: 1px solid #d3d4d7; background: #fff; }
.seg button { flex: 1; padding: 0 3px 1px 0; }
.seg .on { background: #419bf9; color: #fff; }
h4 { font-size: 19px; font-weight: 700; color: #999; margin-top: 15px; }
.props .ck.in { margin-top: 19px; margin-bottom: 15px; }
.f-text { position: relative; padding-bottom: 14px; border-bottom: 1px solid #dedee1; }
.f-text label { margin-right: auto; }
.f-text #tx { width: 181px; height: 35px; padding: 0 3px; border: 3px solid #fa4046; }
.fx { width: 36px; height: 30px; margin-left: 5px; border: 1px solid #d3d4d7; background: #fff; font: bold 20px "Liberation Serif", serif; color: #444; }
.fx small { font-size: 15px; }
.f-text .step { position: absolute; left: 174px; top: 45px; }
```
